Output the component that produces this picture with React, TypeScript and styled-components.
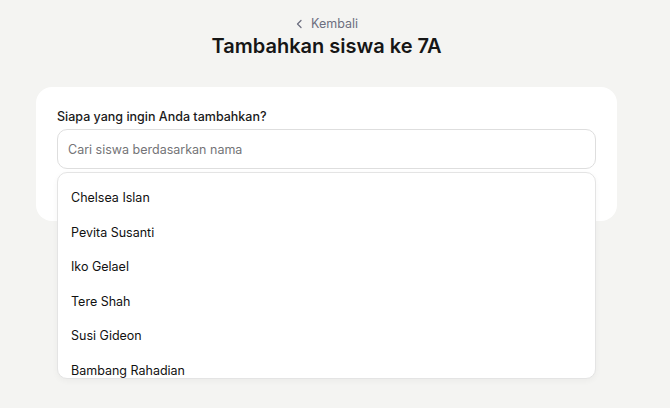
import React from "react";
import styled, { createGlobalStyle } from "styled-components";

const GlobalStyle = createGlobalStyle`
  html, body {
    margin: 0;
    padding: 0;
    background: #f4f4f2;
    font-family: Inter, "Noto Sans", sans-serif;
    color: #1b1b1b;
  }
  * {
    box-sizing: border-box;
  }
`;

const Page = styled.div`
  width: 653px;
  height: 408px;
  overflow: hidden;
  display: flex;
  flex-direction: column;
  align-items: center;
  padding-top: 15px;
`;

const BackLink = styled.a`
  display: flex;
  align-items: center;
  gap: 7px;
  font-size: 12.5px;
  line-height: 18px;
  color: #6d6f80;
  text-decoration: none;
  cursor: pointer;
`;

const Title = styled.h1`
  margin: 0;
  font-size: 20px;
  line-height: 26px;
  font-weight: 600;
  color: #161616;
`;

const Card = styled.div`
  align-self: flex-start;
  margin: 28px 0 0 36px;
  width: 581px;
  background: #ffffff;
  border-radius: 16px;
  padding: 20px 21px 52px;
`;

const Label = styled.label`
  display: block;
  font-size: 12.5px;
  line-height: 20px;
  font-weight: 500;
  color: #1a1a1a;
  margin-bottom: 2px;
`;

const Field = styled.div`
  position: relative;
`;

const SearchInput = styled.input`
  width: 100%;
  height: 40px;
  border: 1px solid #dedede;
  border-radius: 10px;
  padding: 0 10px;
  font-family: inherit;
  font-size: 12.5px;
  color: #1b1b1b;
  outline: none;
  background: #fff;
  caret-color: #333;

  &::placeholder {
    color: #747477;
  }
`;

const Dropdown = styled.ul`
  position: absolute;
  top: 43px;
  left: 0;
  right: 0;
  height: 207px;
  margin: 0;
  padding: 8px 0 0;
  list-style: none;
  background: #fff;
  border: 1px solid #e4e4e4;
  border-radius: 10px;
  box-shadow: 0 2px 6px rgba(0, 0, 0, 0.04);
  overflow: hidden;
`;

const Option = styled.li`
  padding: 8px 13px;
  font-size: 12.5px;
  line-height: 18.5px;
  color: #111111;
  cursor: pointer;

  &:hover {
    background: #f7f7f5;
  }
`;

const students = [
  "Chelsea Islan",
  "Pevita Susanti",
  "Iko Gelael",
  "Tere Shah",
  "Susi Gideon",
  "Bambang Rahadian",
];

const App = () => {
  return (
    <>
      <GlobalStyle />
      <Page>
        <BackLink>
          <svg width="9" height="10" viewBox="0 0 9 10" fill="none">
            <path
              d="M6 1.5L2.5 5L6 8.5"
              stroke="#6d6f80"
              strokeWidth="1.3"
              strokeLinecap="round"
              strokeLinejoin="round"
            />
          </svg>
          Kembali
        </BackLink>
        <Title>Tambahkan siswa ke 7A</Title>
        <Card>
          <Label htmlFor="search">Siapa yang ingin Anda tambahkan?</Label>
          <Field>
            <SearchInput
              id="search"
              autoFocus
              placeholder="Cari siswa berdasarkan nama"
            />
            <Dropdown>
              {students.map((name) => (
                <Option key={name}>{name}</Option>
              ))}
            </Dropdown>
          </Field>
        </Card>
      </Page>
    </>
  );
};

export default App;
